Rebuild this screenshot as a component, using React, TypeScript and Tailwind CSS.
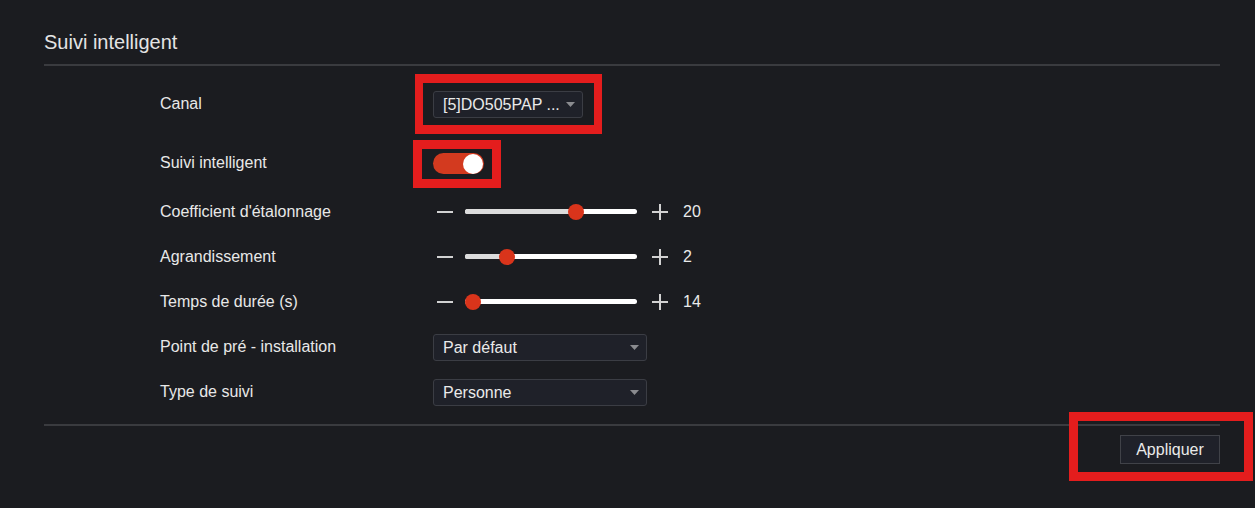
import React from "react";

const font = { fontFamily: '"Liberation Sans", Arial, sans-serif' };

function Caret() {
  return (
    <svg width="9" height="5" viewBox="0 0 9 5" className="shrink-0">
      <path d="M0 0 L9 0 L4.5 5 Z" fill="#8a8b8f" />
    </svg>
  );
}

function Select({ value, w }: { value: string; w: string }) {
  return (
    <div
      className={`${w} h-[27px] flex items-center justify-between pl-[9px] pr-[7px] rounded-[3px] border border-[#3b3d44] bg-[#1f2129] text-[16px] text-[#eaeaea]`}
    >
      <span className="whitespace-nowrap">{value}</span>
      <Caret />
    </div>
  );
}

function Slider({ frac, value }: { frac: number; value: string }) {
  const left = frac * 156;
  return (
    <div className="flex items-center">
      <div className="ml-[4px] w-[16px] h-[2px] bg-[#d2d2d2]" />
      <div className="ml-[12px] relative w-[172px] h-[16px] flex items-center">
        <div className="w-full h-[5px] rounded-full bg-white overflow-hidden">
          <div className="h-full bg-[#dcdcdc]" style={{ width: left + 8 }} />
        </div>
        <div
          className="absolute top-0 w-[16px] h-[16px] rounded-full bg-[#d9341b]"
          style={{ left }}
        />
      </div>
      <svg width="16" height="16" viewBox="0 0 16 16" className="ml-[15px]">
        <path d="M8 0 V16 M0 8 H16" stroke="#d2d2d2" strokeWidth="2" />
      </svg>
      <span className="ml-[15px] text-[16px] text-[#eaeaea]">{value}</span>
    </div>
  );
}

function Row({
  label,
  children,
  cls = "h-[45px]",
  up = false,
}: {
  label: string;
  children: React.ReactNode;
  cls?: string;
  up?: boolean;
}) {
  return (
    <div className={`flex items-center ${cls}`}>
      <div
        className={`w-[389px] shrink-0 pl-[116px] text-[16px] text-[#e8e8e8] whitespace-nowrap ${
          up ? "-mt-[1px]" : "mt-0"
        }`}
      >
        {label}
      </div>
      {children}
    </div>
  );
}

export default function App() {
  return (
    <div
      className="relative w-[1255px] h-[508px] bg-[#1b1c20] overflow-hidden"
      style={font}
    >
      <div className="pl-[44px] pr-[35px]">
        <div className="pt-[28px] h-[56px] text-[20px] leading-[28px] text-[#e4e4e4]">
          Suivi intelligent
        </div>
        <div className="mt-[8px] h-[2px] bg-[#3a3b3f]" />

        <div className="mt-[16px]">
          <Row label="Canal" up>
            <Select value="[5]DO505PAP ..." w="w-[150px]" />
          </Row>
          <Row label="Suivi intelligent" cls="h-[45px] mt-[14px]" up>
            <div className="w-[51px] h-[21px] rounded-full bg-[#d33a1f] flex items-center justify-end pr-[1px]">
              <div className="w-[20px] h-[20px] rounded-full bg-white" />
            </div>
          </Row>
          <Row label="Coefficient d'étalonnage" cls="h-[45px] mt-[3px]">
            <Slider frac={0.66} value="20" />
          </Row>
          <Row label="Agrandissement">
            <Slider frac={0.218} value="2" />
          </Row>
          <Row label="Temps de durée (s)">
            <Slider frac={0} value="14" />
          </Row>
          <Row label="Point de pré - installation">
            <div className="mt-[2px]">
              <Select value="Par défaut" w="w-[214px]" />
            </div>
          </Row>
          <Row label="Type de suivi">
            <div className="mt-[2px]">
              <Select value="Personne" w="w-[214px]" />
            </div>
          </Row>
        </div>

        <div className="mt-[10px] h-[2px] bg-[#3a3b3f]" />
        <div className="mt-[9px] flex justify-end">
          <div className="w-[100px] h-[29px] flex items-center justify-center border border-[#404248] bg-[#1f2129] text-[16px] text-[#eaeaea]">
            Appliquer
          </div>
        </div>
      </div>

      <div className="absolute left-[415px] top-[74px] w-[187px] h-[60px] border-x-[8px] border-y-[9px] border-[#e41d1d]" />
      <div className="absolute left-[413px] top-[140px] w-[88px] h-[48px] border-[9px] border-[#e41d1d]" />
      <div className="absolute left-[1069px] top-[412px] w-[184px] h-[69px] border-[9px] border-[#e41d1d]" />
    </div>
  );
}
